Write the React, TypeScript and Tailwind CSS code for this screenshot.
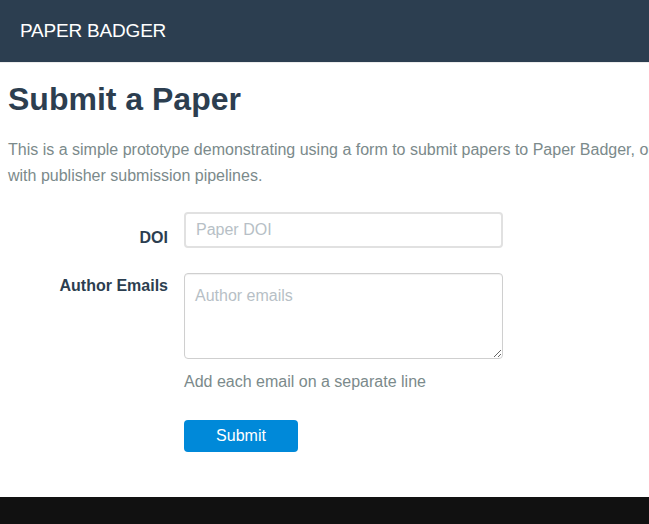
export default function App() {
    return (
        <div className="min-h-screen w-full overflow-hidden flex flex-col bg-[#111111] font-['Liberation_Sans',Arial,sans-serif]">
            {/* Navbar */}
            <nav className="h-[62px] shrink-0 bg-[#2c3e50] px-5 flex items-center">
                <span className="text-[19px] text-white tracking-[-0.2px]">PAPER BADGER</span>
            </nav>

            {/* Main content */}
            <main className="bg-white border-t border-[#ececec] pl-2 pt-[19px] pb-[45px]">
                <h1 className="text-[32px] leading-[35px] font-bold text-[#2c3e50]">Submit a Paper</h1>
                <p className="mt-5 w-[800px] text-[16px] leading-[26px] text-[#7b8a8b] whitespace-nowrap">
                    This is a simple prototype demonstrating using a form to submit papers to Paper Badger, our
                    <br />
                    with publisher submission pipelines.
                </p>

                <form className="mt-[23px] flex flex-col" onSubmit={(e) => e.preventDefault()}>
                    {/* DOI */}
                    <div className="flex gap-4">
                        <label className="w-[160px] shrink-0 text-right pt-[16px] text-[16px] leading-[20px] font-bold text-[#2c3e50]">
                            DOI
                        </label>
                        <input
                            type="text"
                            placeholder="Paper DOI"
                            className="w-[319px] h-[36px] rounded border-2 border-[#e1e1e1] px-[10px] text-[16px] text-[#2c3e50] placeholder:text-[#b7bfc6] outline-none"
                        />
                    </div>

                    {/* Author emails */}
                    <div className="mt-[25px] flex gap-4">
                        <label className="w-[160px] shrink-0 text-right pt-[3px] text-[16px] leading-[20px] font-bold text-[#2c3e50]">
                            Author Emails
                        </label>
                        <div className="flex flex-col">
                            <textarea
                                placeholder="Author emails"
                                className="block w-[319px] h-[86px] rounded border border-[#cfcfcf] shadow-[inset_0_1px_1px_rgba(0,0,0,0.06)] px-[10px] pt-[10px] text-[16px] leading-6 text-[#2c3e50] placeholder:text-[#b7bfc6] outline-none"
                            />
                            <span className="mt-[11px] text-[16px] leading-6 text-[#7b8a8b]">Add each email on a separate line</span>
                            <button
                                type="submit"
                                className="mt-[26px] w-[114px] h-[32px] rounded bg-[#0089d9] text-white text-[16px]"
                            >
                                Submit
                            </button>
                        </div>
                    </div>
                </form>
            </main>

            {/* Footer */}
            <footer className="flex-1 bg-[#111111]" />
        </div>
    );
}
